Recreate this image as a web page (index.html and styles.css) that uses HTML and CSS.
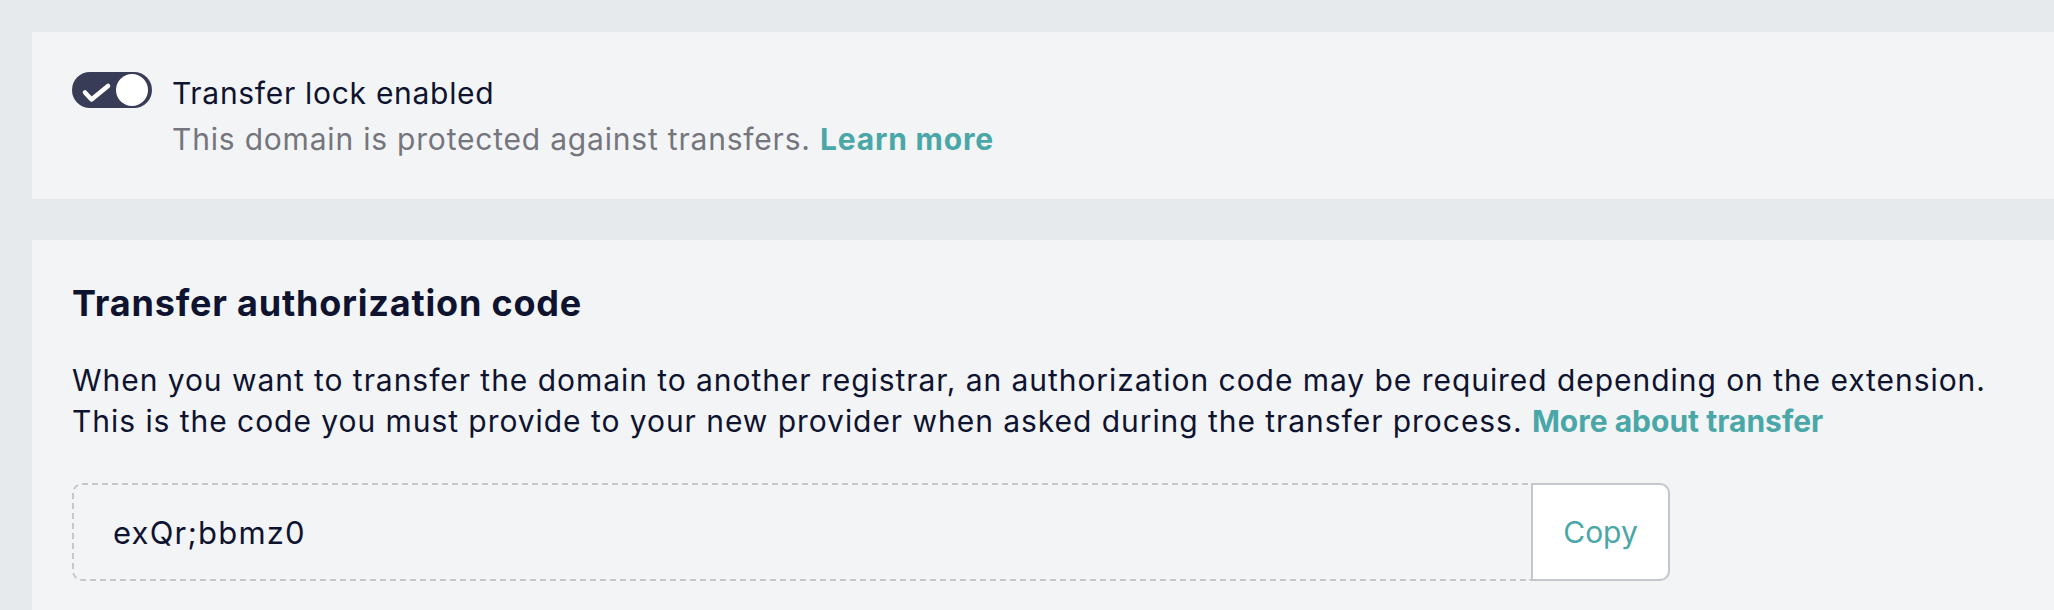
FILE: index.html
```html
<!DOCTYPE html>
<html lang="en">
<head>
    <meta charset="UTF-8">
    <meta name="viewport" content="width=device-width, initial-scale=1.0">
    <title>Domain transfer</title>
    <link rel="stylesheet" href="styles.css">
</head>
<body>
    <div class="page">
        <!-- transfer lock -->
        <section class="panel lock-panel">
            <span class="toggle" role="switch" aria-checked="true">
                <svg width="80" height="36" viewBox="0 0 80 36">
                    <rect x="0" y="0" width="80" height="36" rx="18" fill="#383c57"/>
                    <polyline points="13,20.5 19.5,27.5 36,14" fill="none" stroke="#fff" stroke-width="4.5" stroke-linecap="round" stroke-linejoin="round"/>
                    <circle cx="60" cy="18" r="16" fill="#fff"/>
                </svg>
            </span>
            <div class="lock-text">
                <div class="lock-title">Transfer lock enabled</div>
                <div class="lock-desc">This domain is protected against transfers. <a href="#" class="link">Learn more</a></div>
            </div>
        </section>

        <!-- auth code -->
        <section class="panel auth-panel">
            <h2>Transfer authorization code</h2>
            <p>When you want to transfer the domain to another registrar, an authorization code may be required depending on the extension.<br>
            This is the code you must provide to your new provider when asked during the transfer process. <a href="#" class="link">More about transfer</a></p>
            <div class="code-field">
                <div class="code-value">exQr;bbmz0</div>
                <button class="copy-btn">Copy</button>
            </div>
        </section>
    </div>
</body>
</html>
```

FILE: styles.css
```css
body {
    margin: 0;
    background-color: #e7eaed;
    font-family: Inter, "Open Sans", sans-serif;
    color: #0e1330;
    overflow: hidden;
}
.page {
    display: flex;
    flex-direction: column;
    gap: 41px;
    padding: 32px 0 0 32px;
}
.panel {
    background-color: #f3f4f6;
}
.link {
    color: #4aa7a8;
    font-weight: 700;
    text-decoration: none;
}

/* lock panel */
.lock-panel {
    display: flex;
    align-items: flex-start;
    gap: 20px;
    padding: 40px 40px 39px;
}
.toggle {
    display: block;
    flex: none;
    width: 80px;
    height: 36px;
}
.toggle svg {
    display: block;
}
.lock-title {
    font-size: 30px;
    line-height: 42px;
    letter-spacing: 0.7px;
}
.lock-desc {
    margin-top: 4px;
    font-size: 30px;
    line-height: 42px;
    letter-spacing: 0.8px;
    color: #75767d;
}

/* auth code panel */
.auth-panel {
    padding: 41px 40px 60px;
}
.auth-panel h2 {
    margin: 0;
    font-size: 36px;
    line-height: 44px;
    font-weight: 700;
    letter-spacing: 0.8px;
}
.auth-panel p {
    margin: 35px 0 41px;
    font-size: 30px;
    line-height: 41px;
    letter-spacing: 0.95px;
    white-space: nowrap;
}
.auth-panel p .link {
    letter-spacing: 0;
}
.code-field {
    display: flex;
    width: 1598px;
    height: 98px;
}
.code-value {
    flex: 1;
    display: flex;
    align-items: center;
    padding-left: 39px;
    border: 2px dashed #c5c7cd;
    border-right: none;
    border-radius: 10px 0 0 10px;
    font-size: 31px;
    letter-spacing: 1.2px;
}
.copy-btn {
    width: 139px;
    background-color: #fff;
    border: 2px solid #c5c6cc;
    border-radius: 0 10px 10px 0;
    font-family: inherit;
    font-size: 30px;
    color: #4aa7a8;
    padding: 0;
}
```
